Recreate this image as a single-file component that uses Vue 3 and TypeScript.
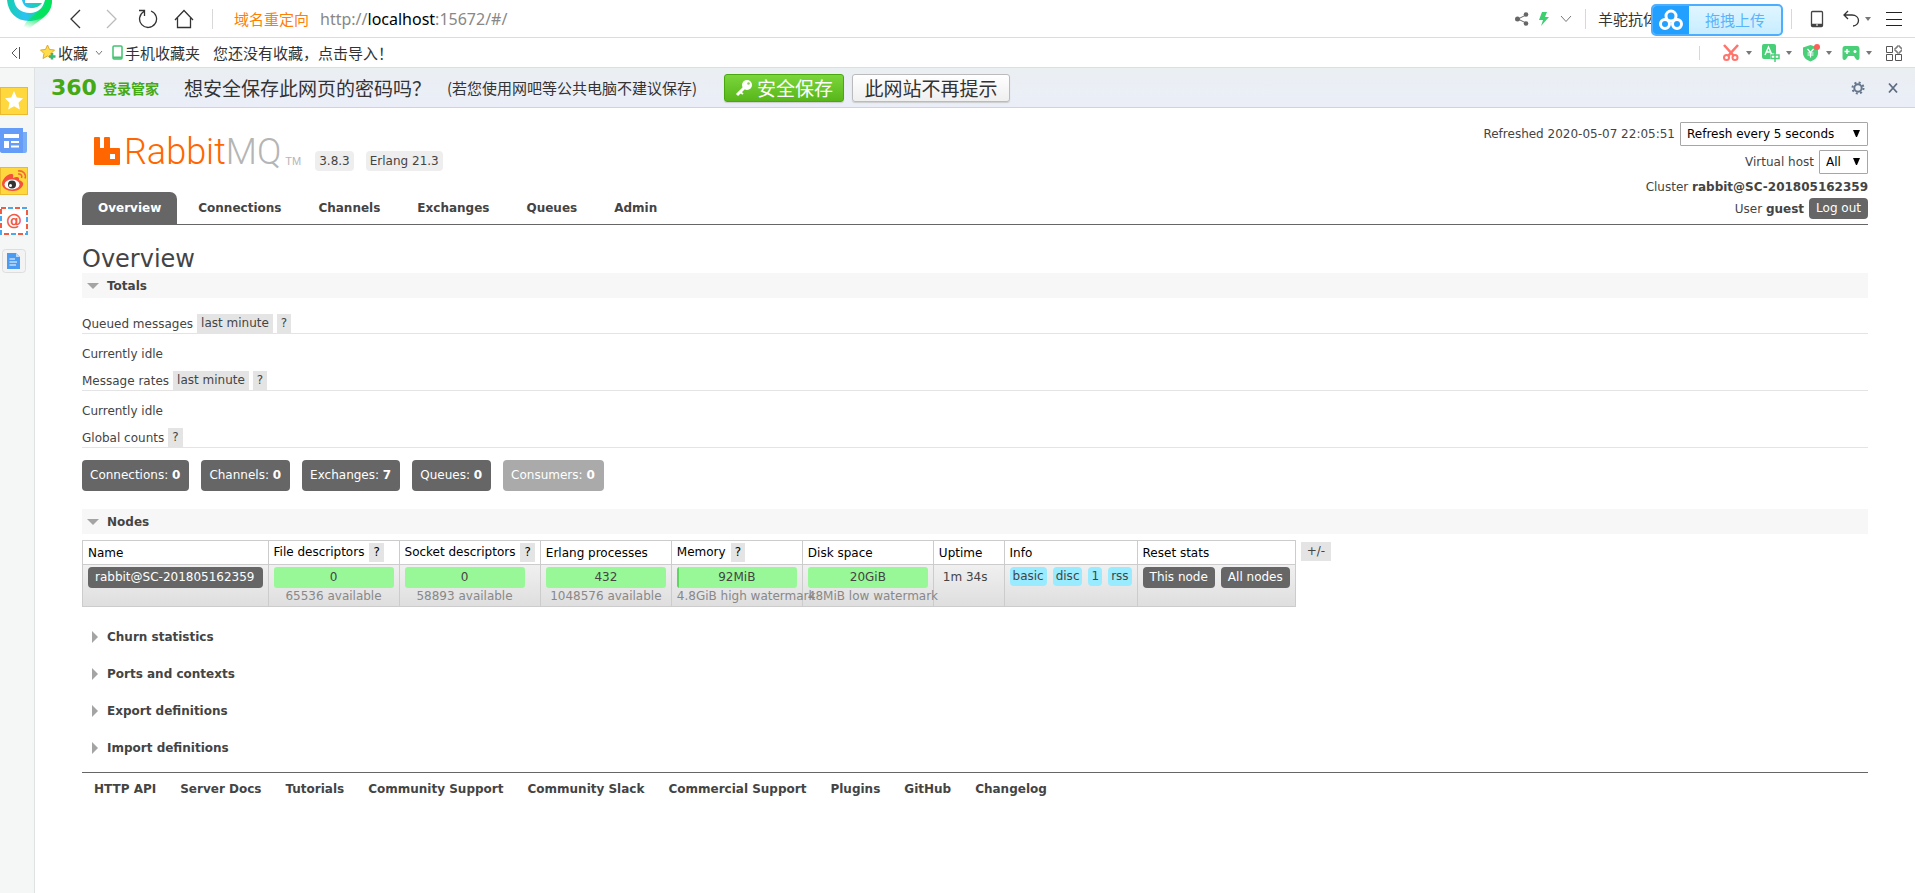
<script setup lang="ts">
import { ref } from 'vue'

interface Meter { title: string; help: boolean; value: string; note: string; fill: number }

const tabs = ['Overview', 'Connections', 'Channels', 'Exchanges', 'Queues', 'Admin']
const active = ref('Overview')
const refresh = ref('Refresh every 5 seconds')
const vhost = ref('All')

const charts = [
  { title: 'Queued messages', range: 'last minute' },
  { title: 'Message rates', range: 'last minute' },
]
const counts = [
  { label: 'Connections', value: 0, off: false },
  { label: 'Channels', value: 0, off: false },
  { label: 'Exchanges', value: 7, off: false },
  { label: 'Queues', value: 0, off: false },
  { label: 'Consumers', value: 0, off: true },
]
const meters: Meter[] = [
  { title: 'File descriptors', help: true, value: '0', note: '65536 available', fill: 0 },
  { title: 'Socket descriptors', help: true, value: '0', note: '58893 available', fill: 0 },
  { title: 'Erlang processes', help: false, value: '432', note: '1048576 available', fill: 0 },
  { title: 'Memory', help: true, value: '92MiB', note: '4.8GiB high watermark', fill: 2 },
  { title: 'Disk space', help: false, value: '20GiB', note: '48MiB low watermark', fill: 0 },
]
const info = ['basic', 'disc', '1', 'rss']
const closed = ['Churn statistics', 'Ports and contexts', 'Export definitions', 'Import definitions']
const footer = ['HTTP API', 'Server Docs', 'Tutorials', 'Community Support', 'Community Slack',
  'Commercial Support', 'Plugins', 'GitHub', 'Changelog']
</script>

<template>
  <div class="browser">
    <header class="toolbar">
      <svg class="brand" width="46" height="32" viewBox="0 0 46 32" aria-hidden="true">
        <defs>
          <linearGradient id="brandFill" x1="0" y1="0" x2="1" y2="0">
            <stop offset="0" stop-color="#14cfae" /><stop offset=".4" stop-color="#2cc3f3" /><stop offset="1" stop-color="#05df66" />
          </linearGradient>
          <linearGradient id="tailFill" x1=".7" y1="0" x2=".4" y2="1">
            <stop offset=".5" stop-color="#05e35e" /><stop offset="1" stop-color="#05e35e" stop-opacity="0" />
          </linearGradient>
        </defs>
        <path d="M0 0H45C44 12 35 21 22 21C9 21 1 12 0 0Z" fill="url(#brandFill)" />
        <path d="M45 0C45 8 42 13 36 18L20 30H14L20 21L38 6V0Z" fill="url(#tailFill)" />
        <path d="M7 0H15C16 5 19 8 24 8C29 8 33 6 35 3H18V0H38C36 8 31 13 23 13C14 13 8 8 7 0Z" fill="#fff" />
      </svg>
      <nav class="nav-buttons" aria-label="Navigation">
        <button type="button" aria-label="Back"><svg width="20" height="20" viewBox="0 0 20 20"><path d="M14 1L5 10L14 19" stroke="#333" stroke-width="1.300" /></svg></button>
        <button type="button" aria-label="Forward"><svg width="20" height="20" viewBox="0 0 20 20"><path d="M5 1L14 10L5 19" stroke="#bbb" stroke-width="1.300" /></svg></button>
        <button type="button" aria-label="Reload"><svg width="20" height="20" viewBox="0 0 20 20"><path d="M1 1.500H6.500V7M6 2.500A8.500 8.500 0 1 0 13 2" stroke="#333" stroke-width="1.300" /></svg></button>
        <button type="button" aria-label="Home"><svg width="20" height="20" viewBox="0 0 20 20"><path d="M1 11L10 1.500L19 11M3.500 9V18.500H16.500V9" stroke="#333" stroke-width="1.300" /></svg></button>
      </nav>
      <i class="rule"></i>
      <div class="address"><b>域名重定向</b><span>http://<em>localhost</em>:15672/#/</span></div>
      <div class="tools">
        <button type="button" class="share" aria-label="Share"><svg width="14" height="14" viewBox="0 0 14 14"><path d="M11 3L3 7L11 11" stroke="#666" /><g fill="#666"><circle cx="11" cy="2.500" r="2.300" /><circle cx="2.500" cy="7" r="2.500" /><circle cx="11" cy="11.500" r="2.300" /></g></svg></button>
        <button type="button" class="bolt" aria-label="Speed mode"><svg width="10" height="14" viewBox="0 0 10 14"><path d="M3 0H8L6 5H10L2 14L4 8H0Z" fill="#3ccf70" /></svg></button>
        <button type="button" class="more" aria-label="More"><svg width="12" height="8" viewBox="0 0 12 8"><path d="M1 1L6 6.500L11 1" stroke="#777" /></svg></button>
        <i class="rule"></i>
        <span class="hot">羊驼抗体</span>
        <i class="rule"></i>
        <button type="button" class="tablet" aria-label="Mobile view"><svg width="14" height="18" viewBox="0 0 14 18"><rect x="1.500" y="1.500" width="11" height="15" rx="1" stroke="#444" stroke-width="1.300" /><path d="M2 15H12" stroke="#444" stroke-width="2.500" /><path d="M6 15H8" stroke="#fff" /></svg></button>
        <button type="button" class="undo" aria-label="Undo"><svg width="18" height="18" viewBox="0 0 18 18"><path d="M6 1L2 5L6 9M2 5H10C14 5 16.500 7.500 16.500 10.500S14 16 11 16" stroke="#333" stroke-width="1.300" /></svg></button>
        <svg class="caret" width="6" height="4" viewBox="0 0 6 4"><path d="M0 0H6L3 4Z" fill="#777" /></svg>
        <button type="button" class="menu" aria-label="Menu"><svg width="16" height="16" viewBox="0 0 16 16"><path d="M0 1.500H16M0 8.500H16M0 14.500H16" stroke="#222" /></svg></button>
      </div>
      <button type="button" class="upload">
        <span class="upload-icon"><svg width="26" height="22" viewBox="0 0 26 22"><g stroke="#fff" stroke-width="3"><circle cx="13" cy="7" r="5" /><circle cx="7" cy="15" r="4.500" /><circle cx="19" cy="15" r="4.500" /></g></svg></span>
        <span class="upload-text">拖拽上传</span>
      </button>
    </header>

    <div class="bookmarks">
      <button type="button" class="fold" aria-label="Hide bookmarks"><svg width="12" height="12" viewBox="0 0 12 12"><path d="M7 1L2 6L7 11M9.500 0V12" stroke="#555" /></svg></button>
      <button type="button" class="fav"><svg width="17" height="17" viewBox="0 0 17 17"><path d="M7.500 1L9.500 5.500L14.500 6L11 9.500L12 14.500L7.500 12L3 14.500L4 9.500L.5 6L5.500 5.500Z" fill="#ffdc4b" stroke="#e2a82c" /><path d="M12 9V15.500M9 12.500H15.500" stroke="#3bb878" stroke-width="2.500" /></svg>收藏<svg width="8" height="6" viewBox="0 0 8 6" class="fav-caret"><path d="M1 1L4 4.500L7 1" stroke="#777" /></svg></button>
      <button type="button" class="phone"><svg width="12" height="15" viewBox="0 0 12 15"><rect x="1" y="1" width="9" height="13" rx="1" stroke="#3fc46f" stroke-width="1.500" /><path d="M1 12.500H10" stroke="#3fc46f" stroke-width="2" /></svg>手机收藏夹</button>
      <button type="button" class="import">您还没有收藏，点击导入！</button>
      <div class="addons">
        <i class="rule"></i>
        <button type="button" aria-label="Screenshot"><svg width="18" height="18" viewBox="0 0 18 18"><path d="M2 1L12 12M16 1L6 12" stroke="#ff746c" stroke-width="2.600" /><g stroke="#ff746c" stroke-width="2"><circle cx="4.500" cy="13.500" r="2.500" /><circle cx="13" cy="13.500" r="2.500" /></g></svg></button>
        <svg class="caret" width="6" height="4" viewBox="0 0 6 4"><path d="M0 0H6L3 4Z" fill="#777" /></svg>
        <button type="button" aria-label="Translate"><svg width="18" height="18" viewBox="0 0 18 18"><rect width="14" height="15" rx="2" fill="#48cf78" /><path d="M3 11L6.500 3L10 11M4.500 8H8.500" stroke="#fff" stroke-width="1.400" /><path d="M8 9.500H18V16H8Z" fill="#fff" /><path d="M9 11H17V14.500H9ZM13 8.500V18" stroke="#48cf78" stroke-width="1.500" /></svg></button>
        <svg class="caret" width="6" height="4" viewBox="0 0 6 4"><path d="M0 0H6L3 4Z" fill="#777" /></svg>
        <button type="button" aria-label="Payment guard"><svg width="18" height="18" viewBox="0 0 18 18"><path d="M8.500 1L16 3.500V9C16 13 13 16 8.500 17.500C4 16 1 13 1 9V3.500Z" fill="#48cf78" /><path d="M5.500 5L8.500 8.500L11.500 5M8.500 8V13.500M5.500 9H11.500M5.500 11H11.500" stroke="#fff" stroke-width="1.200" /><circle cx="15" cy="3" r="3" fill="#ff5f57" /></svg></button>
        <svg class="caret" width="6" height="4" viewBox="0 0 6 4"><path d="M0 0H6L3 4Z" fill="#777" /></svg>
        <button type="button" aria-label="Games"><svg width="18" height="18" viewBox="0 0 18 18"><path d="M3 2H15Q17.500 2 17.500 5V14Q17.500 16 15.500 16Q14 16 12 12H6Q4 16 2.500 16Q.5 16 .5 14V5Q.5 2 3 2Z" fill="#48cf78" /><path d="M2.500 7.500H7.500M5 5V10" stroke="#fff" stroke-width="1.500" /><circle cx="13" cy="7.500" r="1.500" fill="#fff" /></svg></button>
        <svg class="caret" width="6" height="4" viewBox="0 0 6 4"><path d="M0 0H6L3 4Z" fill="#777" /></svg>
        <button type="button" class="apps" aria-label="Extensions"><svg width="16" height="16" viewBox="0 0 16 16"><path d="M.5 1.500H6.500V7.500H.5ZM.5 9.500H6.500V15.500H.5ZM9.500 9.500H15.500V15.500H9.500ZM11 1H14V3H16V6H14V8H11V6H9V3H11Z" stroke="#555" /></svg></button>
      </div>
    </div>

    <div class="body">
      <aside class="rail" aria-label="Shortcuts">
        <a href="#/favorites" aria-label="Favorites"><svg width="28" height="28" viewBox="0 0 28 28"><rect width="28" height="28" fill="#ecba2e" /><rect x="1" y="1" width="26" height="26" fill="#ffd83e" /><path d="M14 4L16.800 10.500L23 11.300L18.500 15.800L19.800 22.500L14 19.200L8.200 22.500L9.500 15.800L5 11.300L11.200 10.500Z" fill="#fff" /></svg></a>
        <a href="#/news" aria-label="News"><svg width="28" height="28" viewBox="0 0 28 28"><path d="M21 5H27V24Q27 26 25 26H20Z" fill="#79aef5" /><path d="M0 1H23V26H3Q0 26 0 24Z" fill="#659cf8" /><path d="M4 7H19V11H4ZM4 14H9V21H4ZM11 14H19V16H11ZM11 18.500H19V20.500H11Z" fill="#fff" /></svg></a>
        <a href="#/weibo" aria-label="Weibo"><svg width="28" height="28" viewBox="0 0 28 28"><rect width="28" height="28" fill="#ecba2e" /><rect x="1" y="1" width="26" height="26" fill="#ffd83e" /><path d="M2 17C2 12 8 6 12 7C14 7 13 10 13 11C17 9 20 10 19 13C22 14 24 16 23 18C21 23 16 24 12 24C7 24 2 21 2 17Z" fill="#f4503b" /><ellipse cx="12" cy="17.500" rx="7.500" ry="5" fill="#fff" /><circle cx="12" cy="17.500" r="4" fill="#333" /><circle cx="10.500" cy="18.500" r="1.500" fill="#fff" /><path d="M18 7C21 6.500 22.500 9 21.500 11M18 4C23 3 26.500 7 25 11.500" fill="none" stroke="#ef6a34" stroke-width="1.600" /></svg></a>
        <a href="#/mail" class="mail" aria-label="Mail"><svg width="28" height="28" viewBox="0 0 28 28"><rect width="28" height="28" fill="#fff" /><rect x="1" y="1" width="26" height="26" fill="none" stroke="#ef5b43" stroke-width="2" stroke-dasharray="5 9" /><rect x="1" y="1" width="26" height="26" fill="none" stroke="#4aa9ea" stroke-width="2" stroke-dasharray="5 9" stroke-dashoffset="-7" /><text x="14" y="19" text-anchor="middle" fill="#ef5b43">@</text></svg></a>
        <a href="#/docs" aria-label="Documents"><svg width="28" height="28" viewBox="0 0 28 28"><rect x="2.500" y="2.500" width="23" height="23" rx="3" fill="#f3f3f3" stroke="#ddd" /><path d="M7 6H16L20 10V22H7Z" fill="#4b9bf3" /><path d="M16 6V10H20Z" fill="#b6dafb" /><path d="M9.500 12H15M9.500 15H17M9.500 18H16" stroke="#fff" stroke-width="1.200" /></svg></a>
      </aside>

      <div class="page">
        <div class="password-bar">
          <span class="guard-logo">360</span><span class="guard-name">登录管家</span>
          <span class="ask">想安全保存此网页的密码吗？</span>
          <span class="hint">(若您使用网吧等公共电脑不建议保存)</span>
          <button type="button" class="save"><svg width="18" height="18" viewBox="0 0 18 18"><path d="M10 8L2 16" stroke="#fff" stroke-width="3" /><path d="M5 13L8 15" stroke="#fff" stroke-width="2" /><circle cx="12" cy="6" r="5" fill="#fff" /><circle cx="13.500" cy="4.500" r="1.300" fill="#8ccf50" /></svg>安全保存</button>
          <button type="button" class="never">此网站不再提示</button>
          <button type="button" class="gear" aria-label="Settings"><svg width="14" height="14" viewBox="0 0 14 14"><circle cx="7" cy="7" r="3.700" stroke="#65758c" stroke-width="2" /><circle cx="7" cy="7" r="5.500" stroke="#65758c" stroke-width="2" stroke-dasharray="2 2.320" /></svg></button>
          <button type="button" class="dismiss" aria-label="Close"><svg width="12" height="12" viewBox="0 0 12 12"><path d="M2 1.500L10 10.500M10 1.500L2 10.500" stroke="#5d6c82" stroke-width="1.800" /></svg></button>
        </div>

        <div class="app">
          <header class="masthead">
            <div class="identity">
              <svg class="mark" width="27" height="28" viewBox="0 0 27 28" aria-hidden="true"><path fill-rule="evenodd" d="M1 0H5Q6 0 6 1V11H10V1Q10 0 11 0H15Q16 0 16 1V11H25Q26 11 26 12V27Q26 28 25 28H1Q0 28 0 27V1Q0 0 1 0ZM16 17V22H21V17Z" fill="#f60" /></svg>
              <span class="wordmark">Rabbit<span>MQ</span></span><span class="tm">TM</span>
              <span class="version">3.8.3</span><span class="version">Erlang 21.3</span>
            </div>
            <nav class="tabs" aria-label="Main">
              <a v-for="t in tabs" :key="t" href="#/" :class="{ on: t === active }" @click.prevent="active = t">{{ t }}</a>
            </nav>
            <div class="status">
              <div class="line select-line">
                <label for="refresh">Refreshed 2020-05-07 22:05:51</label>
                <span class="select wide"><select id="refresh" v-model="refresh"><option>Refresh every 5 seconds</option></select><svg width="7" height="7" viewBox="0 0 7 7"><path d="M0 0H7L4 7H3Z" /></svg></span>
              </div>
              <div class="line select-line">
                <label for="vhost">Virtual host</label>
                <span class="select"><select id="vhost" v-model="vhost"><option>All</option></select><svg width="7" height="7" viewBox="0 0 7 7"><path d="M0 0H7L4 7H3Z" /></svg></span>
              </div>
              <div class="line cluster"><span>Cluster <b>rabbit@SC-201805162359</b></span></div>
              <div class="line"><span>User <b>guest</b></span><button type="button" class="dark">Log out</button></div>
            </div>
          </header>

          <main>
            <h1>Overview</h1>
            <section>
              <h2><i class="tri down"></i>Totals</h2>
              <div class="totals">
                <template v-for="c in charts" :key="c.title">
                  <h3>{{ c.title }}<button type="button" class="grey">{{ c.range }}</button><button type="button" class="grey">?</button></h3>
                  <p>Currently idle</p>
                </template>
                <h3>Global counts<button type="button" class="grey">?</button></h3>
                <div class="counts">
                  <a v-for="c in counts" :key="c.label" href="#/" :class="{ off: c.off }">{{ c.label }}: <b>{{ c.value }}</b></a>
                </div>
              </div>
            </section>

            <section>
              <h2><i class="tri down"></i>Nodes</h2>
              <div class="nodes">
                <table>
                  <thead>
                    <tr>
                      <th>Name</th>
                      <th v-for="m in meters" :key="m.title">{{ m.title }}<button v-if="m.help" type="button" class="grey">?</button></th>
                      <th>Uptime</th><th>Info</th><th>Reset stats</th>
                    </tr>
                  </thead>
                  <tbody>
                    <tr>
                      <td><a href="#/nodes" class="dark node">rabbit@SC-201805162359</a></td>
                      <td v-for="m in meters" :key="m.title">
                        <div class="meter"><i :style="{ width: m.fill + 'px' }"></i><span>{{ m.value }}</span></div>
                        <div class="note">{{ m.note }}</div>
                      </td>
                      <td class="uptime">1m 34s</td>
                      <td><div class="group"><abbr v-for="i in info" :key="i">{{ i }}</abbr></div></td>
                      <td><div class="group"><button type="button" class="dark">This node</button><button type="button" class="dark">All nodes</button></div></td>
                    </tr>
                  </tbody>
                </table>
                <button type="button" class="grey columns">+/-</button>
              </div>
            </section>

            <h2 v-for="c in closed" :key="c" class="closed"><i class="tri right"></i>{{ c }}</h2>
          </main>

          <footer><a v-for="f in footer" :key="f" href="#/">{{ f }}</a></footer>
        </div>
      </div>
    </div>
  </div>
</template>

<style>
html, body { background: #fff; }
</style>

<style scoped>
* { box-sizing: border-box; }
.browser { display: flex; flex-direction: column; min-height: 100vh; background: #fff; color: #444; font: 12px/16px "DejaVu Sans", Verdana, sans-serif; }
button { margin: 0; padding: 0; border: 0; background: none; color: inherit; font: inherit; white-space: nowrap; cursor: pointer; }
a { color: inherit; text-decoration: none; }
svg { display: block; flex: none; }
.toolbar svg, .bookmarks svg, .password-bar svg { fill: none; }
.toolbar, .bookmarks, .password-bar { display: flex; align-items: center; color: #333; font-family: "Noto Sans", "Noto Sans CJK SC", sans-serif; white-space: nowrap; }
.rule { width: 1px; height: 20px; background: #d8d8d8; }

/* browser toolbar */
.toolbar { position: relative; height: 38px; border-bottom: 1px solid #dcdcdc; }
.brand { align-self: flex-start; margin-left: 7px; }
.nav-buttons { display: flex; gap: 16px; margin: 0 18px 0 13px; }
.address { display: flex; align-items: center; gap: 11px; margin-left: 21px; font-size: 16px; line-height: 24px; color: #888; }
.address b { color: #ff8000; font: 15px/24px "Noto Sans CJK SC", sans-serif; }
.address em { color: #000; font-style: normal; }
.tools { display: flex; align-items: center; margin-left: auto; padding-right: 13px; }
.bolt { margin-left: 10px; }
.more { margin: 0 13px 0 11px; }
.hot { width: 193px; margin-left: 12px; font: 15px/24px "Noto Sans CJK SC", sans-serif; }
.tablet { margin-left: 18px; }
.undo { margin-left: 18px; }
.tools .caret { margin: 0 15px 0 5px; }
.upload { position: absolute; top: 4px; right: 132px; display: flex; width: 132px; height: 32px; border: 2px solid #4daeff; border-radius: 5px; background: linear-gradient(#e0f6ff, #c7edff); overflow: hidden; }
.upload-icon { display: flex; align-items: center; justify-content: center; width: 36px; height: 28px; background: #22a0ff; }
.upload-text { flex: 1; color: #5bb4fb; font: 15px/28px "Noto Sans CJK SC", sans-serif; }

/* bookmark bar */
.bookmarks { height: 30px; border-bottom: 1px solid #dcdfe0; font: 15px/24px "Noto Sans CJK SC", sans-serif; }
.bookmarks button { display: flex; align-items: center; }
.fold { margin-left: 10px; }
.fav { gap: 1px; margin-left: 18px; }
.fav-caret { margin-left: 6px; }
.phone { gap: 1px; margin-left: 9px; }
.import { margin-left: 13px; }
.addons { display: flex; align-items: center; margin-left: auto; padding-right: 13px; }
.addons .rule { height: 14px; margin-right: 22px; }
.addons .caret { margin: 0 10px 0 6px; }
.addons .apps { margin-left: 4px; }

.body { display: flex; flex: 1; }
.rail { display: flex; flex-direction: column; gap: 12px; width: 35px; padding-top: 19px; background: #f5f7f7; border-right: 1px solid #dfe2e3; }
.mail text { font: bold 16px "DejaVu Sans", sans-serif; }
.page { flex: 1; min-width: 0; }

/* password prompt */
.password-bar { height: 40px; padding: 0 16px 0 16px; border-bottom: 1px solid #cdd3e6; background: linear-gradient(#eaeff2, #ebeef8); }
.guard-logo { color: #43a914; font: bold 22px/24px "DejaVu Sans", sans-serif; }
.guard-name { margin-left: 6px; color: #43a914; font: bold 14px/24px "Noto Sans CJK SC", sans-serif; }
.ask { margin-left: 25px; font: 19px/28px "Noto Sans CJK SC", sans-serif; }
.hint { margin-left: 16px; font: 15px/24px "Noto Sans CJK SC", sans-serif; }
.save, .never { display: flex; align-items: center; justify-content: center; height: 28px; border: 1px solid #bbb; border-radius: 3px; background: linear-gradient(#fff, #efefef); box-shadow: 0 1px 1px #ccc; font: 19px/24px "Noto Sans CJK SC", sans-serif; }
.save { gap: 4px; width: 120px; margin-left: 27px; border-color: #4aa80f; background: linear-gradient(#7ad63a, #58b61b); color: #fff; }
.never { width: 158px; margin-left: 8px; }
.gear { margin-left: auto; }
.dismiss { margin-left: 22px; }

/* management page */
.app { padding: 14px 47px 0; }
.masthead { display: grid; grid-template-columns: 1fr auto; grid-template-rows: 70px 32px; border-bottom: 1px solid #666; }
.identity { display: flex; align-items: flex-end; padding: 0 0 21px 12px; }
.identity .mark { margin-bottom: 6px; }
.wordmark { margin-left: 3px; color: #f60; font: 300 36px/38px Roboto, sans-serif; }
.wordmark span { color: #b5b5b5; }
.tm { margin: 0 14px 0 4px; color: #b5b5b5; font: 11px/20px "Liberation Sans", sans-serif; }
.version { margin-right: 12px; padding: 2px 4px; border-radius: 4px; background: #eee; }
.tabs { display: flex; gap: 5px; grid-row: 2; }
.tabs a { padding: 8px 16px; border-radius: 7px 7px 0 0; font-weight: bold; }
.tabs .on { background: #666; color: #fff; }
.status { grid-column: 2; grid-row: 1 / 3; }
.line { display: flex; align-items: center; justify-content: flex-end; gap: 5px; height: 27px; }
.select-line { height: 28px; padding-bottom: 4px; }
.cluster { height: 17px; }
.select { position: relative; }
.select select { appearance: none; height: 24px; padding: 0 26px 0 6px; border: 1px solid #a6a6a6; border-radius: 1px; background: #fff; color: #000; font: 12px/16px "DejaVu Sans", Verdana, sans-serif; }
.wide select { width: 188px; }
.select svg { position: absolute; top: 8px; right: 8px; pointer-events: none; }
.dark { display: inline-block; padding: 2px 7px 3px; border-radius: 4px; background: #666; color: #fff; }
.node { padding-right: 8px; }
.grey { padding: 1px 4px 2px; background: #e4e4e4; }

h1 { margin: 20px 0 0; font-size: 24px; font-weight: normal; line-height: 28px; }
h2 { display: flex; align-items: center; height: 25px; margin: 0; background: #f7f7f7; font-size: 12px; font-weight: bold; line-height: 16px; }
.tri { flex: none; border: solid transparent; }
.down { margin: 0 8px 0 5px; border-width: 6px 6px 0; border-top-color: #a4a4a4; }
.right { margin: 0 9px 0 10px; border-width: 6px 0 6px 6px; border-left-color: #a4a4a4; }
.totals { padding: 16px 0 18px; }
h3 { display: flex; align-items: center; gap: 4px; height: 20px; margin: 0; border-bottom: 1px solid #e4e4e4; font-size: 12px; font-weight: normal; line-height: 16px; }
p { margin: 12px 0 9px; line-height: 16px; }
.counts { display: flex; gap: 12px; margin-top: 12px; }
.counts a { padding: 7px 9px 8px 8px; border-radius: 4px; background: #666; color: #fff; }
.counts .off { background: #aaa; }
.nodes { display: flex; align-items: flex-start; padding: 6px 0 17px; }
table { border-collapse: collapse; }
th, td { padding: 2px 5px; border: 1px solid #ccc; text-align: left; vertical-align: top; white-space: nowrap; }
th { height: 24px; color: #000; font-weight: normal; vertical-align: middle; }
th .grey { margin-left: 5px; }
tbody tr { background: linear-gradient(#f0f0f0, #dedede); }
.meter { position: relative; width: 120px; height: 21px; border-radius: 3px; background: #98f898; line-height: 21px; text-align: center; overflow: hidden; }
.meter i { position: absolute; inset: 0 auto 0 0; background: #5fd65f; }
.note { width: 120px; color: #888; text-align: center; }
td.uptime { padding: 4px 16px 4px 9px; }
.group { display: flex; align-items: flex-start; gap: 6px; }
abbr { padding: 1px 3px 2px; border-radius: 4px; background: #99ebff; }
.columns { margin: 2px 0 0 5px; padding: 1px 6px 2px; }
.closed { margin-bottom: 12px; background: none; }
footer { display: flex; gap: 24px; margin-top: 12px; padding: 8px 12px; border-top: 1px solid #666; font-weight: bold; }
</style>
